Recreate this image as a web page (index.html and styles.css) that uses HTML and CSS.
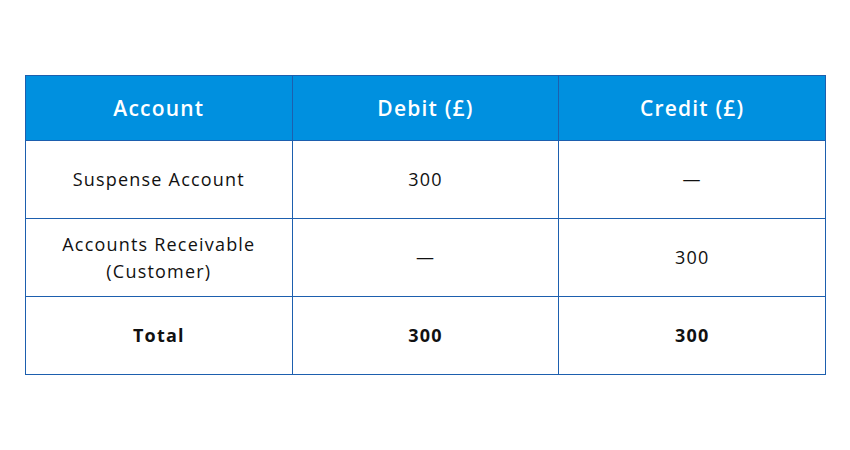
FILE: index.html
```html
<!DOCTYPE html>
<html>
<head>
<meta charset="utf-8">
<link rel="stylesheet" href="styles.css">
</head>
<body>
<div class="page">
<table class="journal">
  <thead>
    <tr><th>Account</th><th>Debit (£)</th><th>Credit (£)</th></tr>
  </thead>
  <tbody>
    <tr><td>Suspense Account</td><td>300</td><td>—</td></tr>
    <tr><td>Accounts Receivable<br>(Customer)</td><td>—</td><td>300</td></tr>
    <tr class="total"><td>Total</td><td>300</td><td>300</td></tr>
  </tbody>
</table>
</div>
</body>
</html>
```

FILE: styles.css
```css
html, body { margin: 0; padding: 0; background: #ffffff; }
.page { padding: 75px 25px 0 25px; }
.journal {
  width: 801px;
  border-collapse: collapse;
  table-layout: fixed;
  font-family: "Open Sans", "Liberation Sans", sans-serif;
  color: #111111;
}
.journal th, .journal td {
  border: 1px solid #1d5fae;
  text-align: center;
  vertical-align: middle;
  padding: 0 6px;
}
.journal th {
  background: #0090df;
  color: #ffffff;
  font-size: 21px;
  font-weight: 600;
  height: 64px;
  letter-spacing: 1.2px;
}
.journal td {
  font-size: 18px;
  height: 77px;
  line-height: 27px;
  letter-spacing: 1.2px;
}
.journal .total td { font-weight: 700; }
```
